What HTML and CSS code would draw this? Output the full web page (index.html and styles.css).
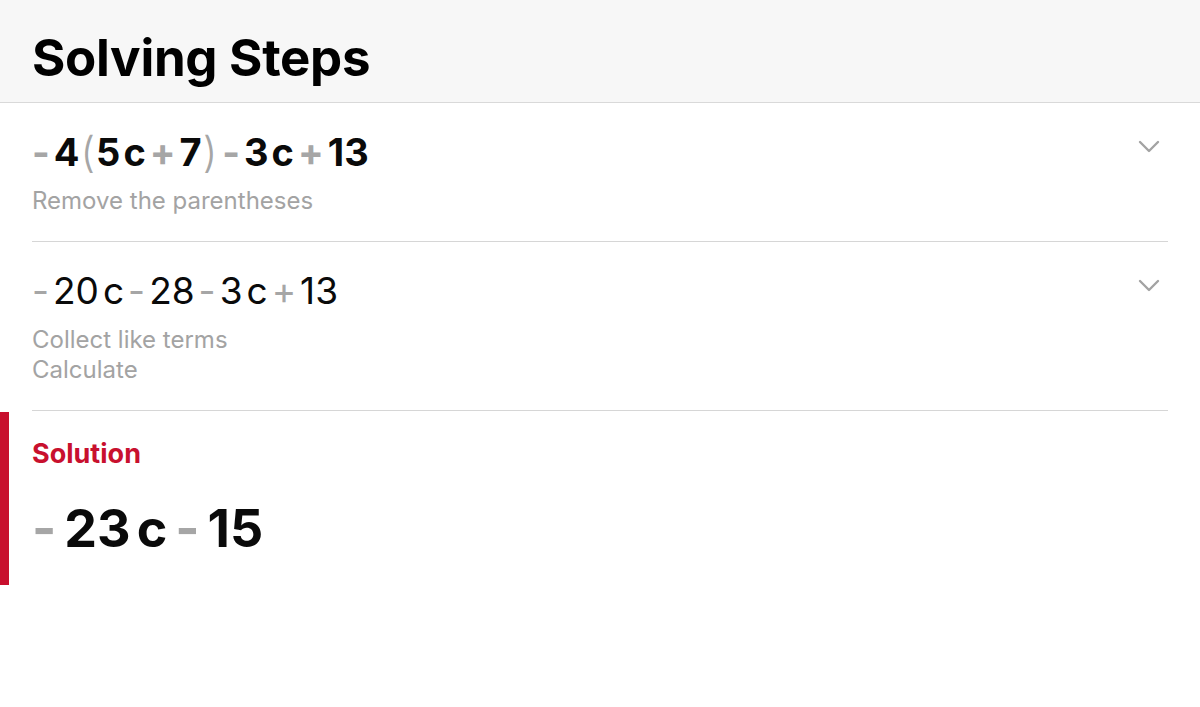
FILE: index.html
```html
<!DOCTYPE html>
<html lang="en">
<head>
<meta charset="utf-8">
<title>Solving Steps</title>
<link rel="stylesheet" href="styles.css">
</head>
<body>
<header class="top">
  <h1 class="title">Solving Steps</h1>
</header>
<main class="steps">
  <section class="step">
    <div class="step-main">
      <div class="expr expr-bold"><span class="op">-</span><span class="t">4</span><span class="par">(</span><span class="t">5</span><span class="v">c</span><span class="op">+</span><span class="t">7</span><span class="par">)</span><span class="op">-</span><span class="t">3</span><span class="v">c</span><span class="op">+</span><span class="t">13</span></div>
      <div class="desc">Remove the parentheses</div>
    </div>
    <svg class="chev" width="22" height="14" viewBox="0 0 22 14"><polyline points="2,2 11,11 20,2" fill="none" stroke="#a3a3a3" stroke-width="2.4" stroke-linecap="round" stroke-linejoin="round"/></svg>
  </section>
  <section class="step">
    <div class="step-main">
      <div class="expr expr-reg"><span class="op">-</span><span class="t">20</span><span class="v">c</span><span class="op">-</span><span class="t">28</span><span class="op">-</span><span class="t">3</span><span class="v">c</span><span class="op">+</span><span class="t">13</span></div>
      <div class="desc">Collect like terms</div>
      <div class="desc">Calculate</div>
    </div>
    <svg class="chev" width="22" height="14" viewBox="0 0 22 14"><polyline points="2,2 11,11 20,2" fill="none" stroke="#a3a3a3" stroke-width="2.4" stroke-linecap="round" stroke-linejoin="round"/></svg>
  </section>
  <section class="solution">
    <div class="sol-label">Solution</div>
    <div class="expr expr-big"><span class="op">-</span><span class="t">23</span><span class="v">c</span><span class="op">-</span><span class="t">15</span></div>
  </section>
</main>
</body>
</html>
```

FILE: styles.css
```css
* { box-sizing: border-box; }
html, body { margin: 0; padding: 0; background: #ffffff; }
body {
  font-family: Inter, "Noto Sans", "Liberation Sans", sans-serif;
  color: #0a0a0a;
  width: 1200px;
  height: 707px;
  overflow: hidden;
}
.top {
  background: #f7f7f7;
  height: 103px;
  border-bottom: 1px solid #d9d9d9;
  padding: 0 32px;
  display: flex;
  align-items: flex-end;
}
.title {
  margin: 0 0 14px 0;
  font-size: 51px;
  line-height: 60px;
  font-weight: 700;
  letter-spacing: -0.3px;
  color: #000;
}
.steps { display: flex; flex-direction: column; }
.step {
  margin: 0 32px;
  border-bottom: 1px solid #d6d6d6;
  display: flex;
  justify-content: space-between;
  align-items: flex-start;
  padding: 27px 8px 25px 0;
}
.step-main { display: flex; flex-direction: column; }
.expr {
  display: flex;
  align-items: center;
  font-size: 38px;
  line-height: 44px;
  margin-bottom: 12px;
}
.expr-bold { font-weight: 700; }
.expr-bold .op { margin: 0 4px; }
.expr-bold .op:first-child { margin-left: 0; }
.expr-bold .v { margin-left: 3px; }
.expr-reg { font-weight: 400; font-size: 37px; margin-bottom: 12px; }
.op { color: #a6a6a6; margin: 0 4px; }
.op:first-child { margin-left: 0; }
.par { color: #a6a6a6; font-weight: 300; font-size: 42px; margin: 0 1px; }
.v { margin-left: 4px; }
.desc {
  font-size: 24px;
  line-height: 30px;
  color: #a3a3a3;
}
.chev { margin-top: 10px; }
.solution {
  border-left: 9px solid #c8102e;
  margin-top: 1px;
  padding: 25px 0 26px 23px;
}
.sol-label {
  color: #c8102e;
  font-weight: 700;
  font-size: 27px;
  line-height: 34px;
  margin-bottom: 28px;
}
.expr-big {
  font-weight: 700;
  font-size: 52px;
  line-height: 60px;
  margin-bottom: 0;
}
.expr-big .op { margin: 0 8px; }
.expr-big .op:first-child { margin-left: 0; }
.expr-big .v { margin-left: 6px; }
```
